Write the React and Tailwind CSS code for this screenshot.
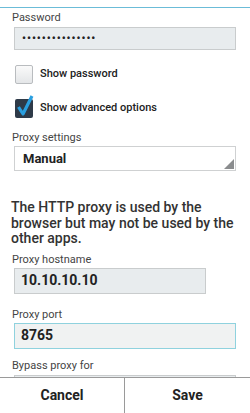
export default function App() {
  const font = { fontFamily: "Roboto, 'Noto Sans', sans-serif" }
  return (
    <div className="w-[250px] h-[413px] bg-white flex flex-col overflow-hidden" style={font}>
      <div className="flex-1 overflow-hidden">
        <div className="h-[7px]" />
        <div className="h-px bg-[#6bbcd8]" />

        <div className="mt-[3px] ml-[12px] h-[14px] leading-[14px] text-[11px] text-[#444]">Password</div>
        <div className="mt-[2px] ml-[14px] w-[222px] h-[23px] bg-[#e8ecee] border border-[#c9cccd] flex items-center pl-[7px]">
          <span className="text-[11px] tracking-[1px] text-[#222] font-bold leading-none">•••••••••••••••</span>
        </div>

        <div className="mt-[15px] ml-[15px] h-[19px] flex items-center">
          <div className="w-[18px] h-[19px] rounded-[2px] border border-[#b9bcbf] bg-gradient-to-b from-[#fafafa] to-[#e4e6e8]" />
          <span className="ml-[7px] text-[11px] font-medium text-[#222]">Show password</span>
        </div>

        <div className="mt-[14px] ml-[15px] h-[20px] flex items-center">
          <div className="relative w-[18px] h-[19px] rounded-[2px] bg-[#2e3a48]">
            <svg className="absolute left-[1px] top-[-4px]" width="18" height="22" viewBox="0 0 18 22">
              <path d="M2.5 12 L7 19 L16 1" fill="none" stroke="#2a9fe0" strokeWidth="3.2" strokeLinejoin="round" />
            </svg>
          </div>
          <span className="ml-[7px] text-[11px] font-medium text-[#222]">Show advanced options</span>
        </div>

        <div className="mt-[13px] ml-[12px] h-[14px] leading-[14px] text-[11px] text-[#444]">Proxy settings</div>
        <div className="relative mt-[1px] ml-[14px] w-[222px] h-[25px] bg-white border border-[#cfd1d2] flex items-center pl-[8px]">
          <span className="text-[13px] font-bold text-[#222]">Manual</span>
          <div className="absolute right-[1px] bottom-[1px] w-0 h-0 border-l-[10px] border-l-transparent border-b-[10px] border-b-[#8a8c8e]" />
        </div>

        <p className="mt-[29px] ml-[11px] mr-[10px] text-[14px] leading-[15.5px] font-medium text-[#333]">
          The HTTP proxy is used by the browser but may not be used by the other apps.
        </p>

        <div className="mt-[6px] ml-[12px] h-[14px] leading-[14px] text-[11px] text-[#444]">Proxy hostname</div>
        <div className="mt-[1px] ml-[14px] w-[192px] h-[26px] bg-[#e8ecee] border border-[#c9cccd] flex items-center pl-[6px]">
          <span className="text-[14px] font-bold text-[#222]">10.10.10.10</span>
        </div>

        <div className="mt-[14px] ml-[12px] h-[14px] leading-[14px] text-[11px] text-[#444]">Proxy port</div>
        <div className="mt-[1px] ml-[14px] w-[222px] h-[26px] bg-[#f0f2f2] border border-[#8fd2de] flex items-center pl-[6px]">
          <span className="text-[14px] font-bold text-[#222]">8765</span>
        </div>

        <div className="mt-[10px] ml-[12px] h-[14px] leading-[14px] text-[11px] text-[#444]">Bypass proxy for</div>
        <div className="mt-[2px] ml-[14px] w-[222px] h-[26px] bg-[#e8ecee] border border-[#c9cccd]" />
      </div>

      <div className="h-[36px] border-t border-[#9a9a9a] bg-white flex">
        <div className="w-[124px] flex items-center justify-center text-[14px] font-bold text-[#222]">Cancel</div>
        <div className="w-px bg-[#9a9a9a]" />
        <div className="flex-1 flex items-center justify-center text-[14px] font-bold text-[#222]">Save</div>
      </div>
    </div>
  )
}
